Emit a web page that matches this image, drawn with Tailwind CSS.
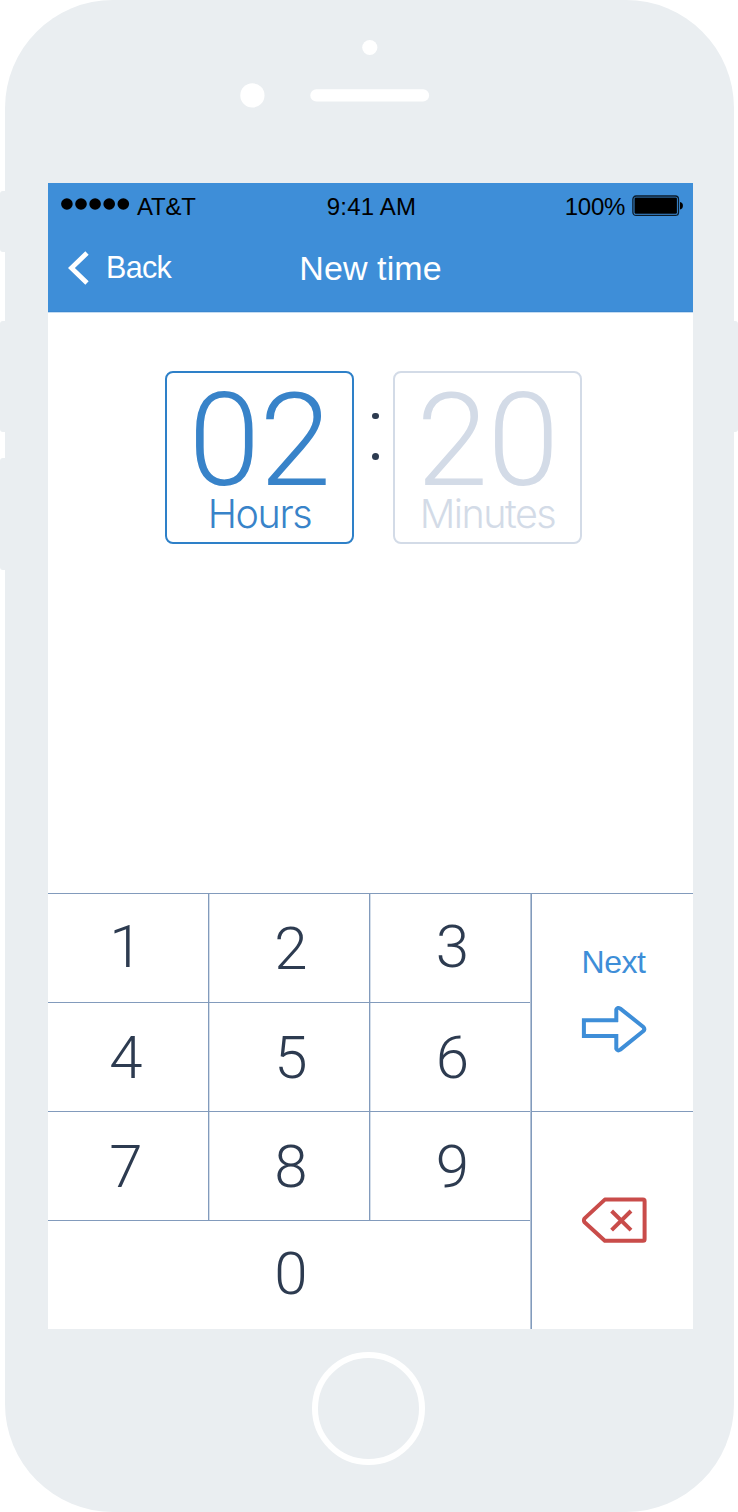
<!DOCTYPE html>
<html lang="en">
<head>
<meta charset="utf-8">
<title>New time</title>
<script src="https://cdn.jsdelivr.net/npm/@tailwindcss/browser@4"></script>
</head>
<body class="bg-white">
<div class="relative h-[1512px] w-[738px] overflow-hidden px-[4.5px] font-['Liberation_Sans',sans-serif]">
  <!-- side buttons -->
  <div class="absolute left-0 top-[191px] h-[61px] w-2 rounded-l-[3px] bg-[#eaeef1]"></div>
  <div class="absolute left-0 top-[320.5px] h-[111.5px] w-2 rounded-l-[3px] bg-[#eaeef1]"></div>
  <div class="absolute left-0 top-[458px] h-[111.5px] w-2 rounded-l-[3px] bg-[#eaeef1]"></div>
  <div class="absolute right-0 top-[320.5px] h-[111.5px] w-2 rounded-r-[3px] bg-[#eaeef1]"></div>

  <div class="relative flex h-[1512px] w-[729px] flex-col rounded-[108px] bg-[#eaeef1] pl-[43.5px]">
    <!-- sensors and speaker -->
    <div class="h-[183px] shrink-0">
      <svg class="block" width="645" height="183" viewBox="48 0 645 183" fill="#fff"><circle cx="369.8" cy="47.5" r="7.6"/><circle cx="252.4" cy="95.4" r="12.1"/><rect x="310.3" y="89.2" width="118.8" height="12.4" rx="6"/></svg>
    </div>

    <main class="flex h-[1146px] w-[645px] shrink-0 flex-col bg-white">
      <header class="h-[129px] shrink-0 border-b border-[#3a87d0] bg-[#3e8ed8] shadow-[0_1px_0_0_#c4dcf2]">
        <div class="grid h-[45px] grid-cols-3 items-center pl-[12px] pr-[10px] text-[24px] leading-[36px] text-black">
          <div class="flex items-center gap-[7px]">
            <svg class="-mt-[3px]" width="70" height="12" viewBox="0 0 70 12"><circle cx="6.9" cy="6" r="5.8"/><circle cx="21" cy="6" r="5.8"/><circle cx="35.1" cy="6" r="5.8"/><circle cx="49.2" cy="6" r="5.8"/><circle cx="63.3" cy="6" r="5.8"/></svg>
            <span class="pt-[3px] tracking-[-0.2px]">AT&amp;T</span>
          </div>
          <div class="pt-[3px] text-center tracking-[0.2px]">9:41 AM</div>
          <div class="flex items-center justify-end gap-[7px]">
            <span class="pt-[3px] tracking-[-0.3px]">100%</span>
            <svg width="51" height="22" viewBox="0 0 51 22"><rect x=".9" y="1" width="45.6" height="19.4" rx="3.2" fill="none" stroke="#0a1a28" stroke-width="1.3"/><rect x="2.5" y="2.6" width="42.4" height="16.2" rx="1.2"/><path d="M48 7a3.8 3.8 0 0 1 0 7.4z"/></svg>
          </div>
        </div>
        <div class="grid h-[80px] grid-cols-3 items-center text-white">
          <div class="flex items-center gap-[17px] pl-[20px] text-[30.5px] tracking-[-0.7px]">
            <svg width="21" height="34" viewBox="0 0 21 34" fill="none" stroke="#fff" stroke-width="4.8"><path d="M19 2 3.4 17 19 32"/></svg>
            <span>Back</span>
          </div>
          <h1 class="text-center text-[34px] tracking-[0.1px] whitespace-nowrap">New time</h1>
        </div>
      </header>

      <section class="flex h-[581px] shrink-0 items-start pl-[117px] pt-[59px] font-[Roboto,sans-serif] font-light">
        <div class="flex h-[173px] w-[189px] flex-col items-center rounded-[8px] border-2 border-[#2e80c8] text-[#3883c9]">
          <div class="mt-[13px] h-[104px] text-[129px] leading-[110px] tracking-[-0.5px]">02</div>
          <div class="font-[Inter,sans-serif] text-[39.5px] leading-[48px] tracking-[-1.4px]">Hours</div>
        </div>
        <div class="flex w-[39px] flex-col items-center gap-[34px] pl-[4px] pt-[42px]">
          <span class="size-[6.4px] rounded-full bg-[#2d3b50]"></span>
          <span class="size-[6.4px] rounded-full bg-[#2d3b50]"></span>
        </div>
        <div class="flex h-[173px] w-[189px] flex-col items-center rounded-[8px] border-2 border-[#d3dbe7] text-[#d3dbe7]">
          <div class="mt-[13px] h-[104px] text-[129px] leading-[110px] tracking-[-0.5px]">20</div>
          <div class="font-[Inter,sans-serif] text-[39.5px] leading-[48px] tracking-[-1.5px]">Minutes</div>
        </div>
      </section>

      <section class="flex grow border-t border-[#829bbc]">
        <div class="grid w-[482px] grid-cols-[161px_161px_160px] grid-rows-[109px_109px_109px_108px] font-[Roboto,sans-serif] text-[60px] leading-[106px] font-light text-[#2d3b50] text-center">
          <div class="border-b border-r border-[#829bbc] pr-[4px] shadow-[1px_0_0_0_#d3dde9]">1</div>
          <div class="border-b border-r border-[#829bbc] pl-[4px] pt-[2px] shadow-[1px_0_0_0_#d3dde9]">2</div>
          <div class="border-b border-[#829bbc] pl-[5px]">3</div>
          <div class="border-b border-r border-[#829bbc] pr-[4px] pt-[2px] shadow-[1px_0_0_0_#d3dde9]">4</div>
          <div class="border-b border-r border-[#829bbc] pl-[4px] pt-[2px] shadow-[1px_0_0_0_#d3dde9]">5</div>
          <div class="border-b border-[#829bbc] pl-[5px] pt-[2px]">6</div>
          <div class="border-b border-r border-[#829bbc] pr-[4px] pt-[2px] shadow-[1px_0_0_0_#d3dde9]">7</div>
          <div class="border-b border-r border-[#829bbc] pl-[4px] pt-[2px] shadow-[1px_0_0_0_#d3dde9]">8</div>
          <div class="border-b border-[#829bbc] pl-[5px] pt-[2px]">9</div>
          <div class="col-span-3 pl-[4px]">0</div>
        </div>
        <div class="flex grow flex-col border-l border-[#b4c3d7]">
          <div class="flex h-[218px] flex-col items-center border-b border-l border-[#829bbc] pl-[2px] pt-[49px]">
            <span class="text-[32px] leading-[38px] tracking-[-0.5px] text-[#3e8ed8]">Next</span>
            <svg class="mt-[23px]" width="66" height="50" viewBox="581 1004 66 50" fill="none" stroke="#3e8ed8" stroke-width="4" stroke-linejoin="miter"><path d="M618 1020.2H583.9V1036H618"/><path stroke-linejoin="round" d="M616.3 1022V1009.5Q617.5 1006.8 620.3 1008.6L643.4 1027Q645.2 1029.2 643.4 1031L620.3 1049.6Q617.5 1051.5 616.3 1048.8V1034"/></svg>
          </div>
          <div class="flex grow items-center justify-center border-l border-[#829bbc] pb-[2px] pl-[2px]">
            <svg width="66" height="50" viewBox="581 1195 66 50" fill="none" stroke="#c94c4a" stroke-width="4" stroke-linejoin="round"><path d="M604.8 1199.6H643Q644.6 1199.6 644.6 1201.2V1239.2Q644.6 1240.8 643 1240.8H604.8L584.6 1222.3Q583.3 1220.4 584.6 1218.4Z"/><path d="M611.6 1211 631 1230.2M631 1211 611.6 1230.2"/></svg>
          </div>
        </div>
      </section>
    </main>

    <!-- home button -->
    <div class="ml-[263.5px] mt-[23px] size-[113px] rounded-full border-[6px] border-white"></div>
  </div>
</div>
</body>
</html>
